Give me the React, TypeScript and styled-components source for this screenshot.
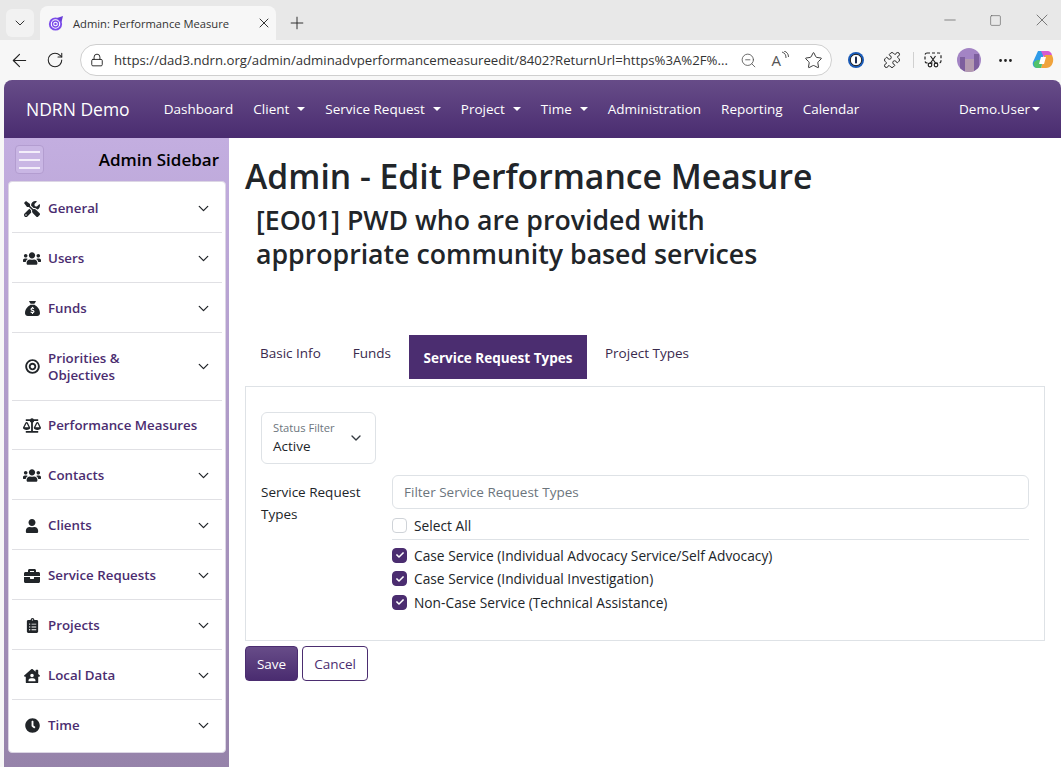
import React from "react"
import styled, { createGlobalStyle } from "styled-components"
import {
	FaTools,
	FaUsers,
	FaBullseye,
	FaBalanceScale,
	FaUser,
	FaBriefcase,
	FaClipboardList,
	FaHouseUser,
	FaClock,
	FaCheck,
} from "react-icons/fa"
import { FaSackDollar } from "react-icons/fa6"
import {
	ArrowLeft,
	RotateCw,
	Lock,
	ZoomOut,
	Star,
	Puzzle,
	Ellipsis,
	ChevronDown,
	X,
	Plus,
	Minus,
	Square,
} from "lucide-react"

const FONT = `"Open Sans", "Noto Sans", sans-serif`

const GlobalStyle = createGlobalStyle`
	html, body {
		margin: 0;
		height: 767px;
		overflow: hidden;
		background: #f7f7f7;
		font-family: ${FONT};
		color: #212529;
	}
	* { box-sizing: border-box; }
`

const sideItems = [
	{ icon: <FaTools size={16} />, label: "General", chevron: true },
	{ icon: <FaUsers size={19} />, label: "Users", chevron: true },
	{ icon: <FaSackDollar size={15} />, label: "Funds", chevron: true },
	{ icon: <FaBullseye size={15} />, label: "Priorities & Objectives", chevron: true, tall: true },
	{ icon: <FaBalanceScale size={19} />, label: "Performance Measures", chevron: false, short: true },
	{ icon: <FaUsers size={19} />, label: "Contacts", chevron: true },
	{ icon: <FaUser size={14} />, label: "Clients", chevron: true },
	{ icon: <FaBriefcase size={16} />, label: "Service Requests", chevron: true },
	{ icon: <FaClipboardList size={15} />, label: "Projects", chevron: true },
	{ icon: <FaHouseUser size={16} />, label: "Local Data", chevron: true },
	{ icon: <FaClock size={15} />, label: "Time", chevron: true },
]

const navItems = [
	{ label: "Dashboard" },
	{ label: "Client", caret: true },
	{ label: "Service Request", caret: true },
	{ label: "Project", caret: true },
	{ label: "Time", caret: true },
	{ label: "Administration" },
	{ label: "Reporting" },
	{ label: "Calendar" },
]

const checks = [
	"Case Service (Individual Advocacy Service/Self Advocacy)",
	"Case Service (Individual Investigation)",
	"Non-Case Service (Technical Assistance)",
]

const App: React.FC = () => {
	return (
		<>
			<GlobalStyle />
			<TabStrip>
				<TabMenu>
					<ChevronDown size={16} strokeWidth={1.5} />
				</TabMenu>
				<BrowserTab>
					<svg width="18" height="18" viewBox="0 0 18 18" fill="none">
						<circle cx="8.5" cy="10" r="6.6" fill="#7c4dea" />
						<circle cx="8.5" cy="10" r="4.2" fill="none" stroke="#fff" strokeWidth="1.1" />
						<circle cx="8.5" cy="10" r="1.8" fill="none" stroke="#fff" strokeWidth="1.1" />
						<path d="M10 4 L16 2 L14.5 8 Z" fill="#6a3fd8" />
					</svg>
					<TabTitle>Admin: Performance Measure</TabTitle>
					<X size={16} strokeWidth={1.5} color="#333" />
				</BrowserTab>
				<NewTab>
					<Plus size={20} strokeWidth={1.1} color="#222" />
				</NewTab>
				<WindowControls>
					<Minus size={18} strokeWidth={0.9} color="#555" />
					<Square size={13} strokeWidth={1.1} color="#555" />
					<X size={20} strokeWidth={0.9} color="#555" />
				</WindowControls>
			</TabStrip>
			<Toolbar>
				<ToolIcon>
					<ArrowLeft size={21} strokeWidth={1.3} color="#222" />
				</ToolIcon>
				<ToolIcon>
					<RotateCw size={18} strokeWidth={1.4} color="#222" />
				</ToolIcon>
				<AddressBar>
					<Lock size={14} strokeWidth={1.6} color="#222" />
					<Url>https://dad3.ndrn.org/admin/adminadvperformancemeasureedit/8402?ReturnUrl=https%3A%2F%...</Url>
					<AddressIcons>
						<ZoomOut size={17} strokeWidth={1.2} color="#555" />
						<ReadAloud>
							A
							<svg width="8" height="10" viewBox="0 0 8 10" fill="none" stroke="#555" strokeWidth="1">
								<path d="M1 1c3 1 4 3 4 6" />
								<path d="M3 0c3 1 4.500 3 4.500 6" />
							</svg>
						</ReadAloud>
						<Star size={19} strokeWidth={1.2} color="#333" />
					</AddressIcons>
				</AddressBar>
				<Extensions>
					<ExtSlot>
						<svg width="18" height="18" viewBox="0 0 18 18">
							<circle cx="9" cy="9" r="8" fill="#1a5bb8" />
							<circle cx="9" cy="9" r="5.700" fill="#fff" stroke="#222" strokeWidth="1" />
							<rect x="8" y="5.500" width="2" height="7" rx="0.800" fill="#1c2a4d" />
						</svg>
					</ExtSlot>
					<ExtSlot>
						<Puzzle size={18} strokeWidth={1.3} color="#222" />
					</ExtSlot>
					<ToolDivider />
					<ExtSlot>
						<svg width="18" height="16" viewBox="0 0 18 16" fill="none" stroke="#222" strokeWidth="1.2">
							<rect x="1" y="1" width="16" height="10" rx="2" strokeDasharray="3 2" />
							<path d="M6.500 4l5 7M11.500 4l-5 7" />
							<circle cx="6" cy="13" r="1.800" />
							<circle cx="12" cy="13" r="1.800" />
						</svg>
					</ExtSlot>
					<ExtSlot>
						<Avatar>
							<svg width="24" height="24" viewBox="0 0 24 24">
								<rect width="24" height="24" fill="#a384c4" />
								<rect x="3" y="9" width="5" height="15" fill="#7d5f9e" />
								<rect x="8" y="11" width="9" height="13" fill="#b39ab0" />
								<rect x="17" y="6" width="5" height="18" fill="#7d5f9e" />
							</svg>
						</Avatar>
					</ExtSlot>
					<ExtSlot>
						<Ellipsis size={17} strokeWidth={2} color="#222" />
					</ExtSlot>
					<CopilotSlot>
						<svg width="22" height="22" viewBox="0 0 22 22">
							<path d="M6 2h6l-3 17H5C2 19 0 16 1 13z" fill="#2f9be8" />
							<path d="M9 2h6c3 0 5 2 5 5l-1 6h-5z" fill="#d65ad0" />
							<path d="M13 6h7l1 3c1 5-2 10-7 10H9z" fill="#f0a33c" />
							<path d="M5 11h6l-2 8H5C2 19 1 15 2 13z" fill="#52c26a" />
							<path d="M9 8h5l-2 7H7z" fill="#fff" />
						</svg>
					</CopilotSlot>
				</Extensions>
			</Toolbar>
			<Page>
				<NavBar>
					<Brand>NDRN Demo</Brand>
					<NavLinks>
						{navItems.map((item) => (
							<NavLink key={item.label}>
								{item.label}
								{item.caret && <Caret />}
							</NavLink>
						))}
					</NavLinks>
					<UserMenu>
						Demo.User
						<Caret />
					</UserMenu>
				</NavBar>
				<Body>
					<Sidebar>
						<SidebarHead>
							<Burger>
								<BurgerLine />
								<BurgerLine />
								<BurgerLine />
							</Burger>
							<SidebarTitle>Admin Sidebar</SidebarTitle>
						</SidebarHead>
						<SideCard>
							{sideItems.map((item) => (
								<SideItem key={item.label} $tall={item.tall} $short={item.short}>
									<SideIcon>{item.icon}</SideIcon>
									<SideLabel $tall={item.tall}>{item.label}</SideLabel>
									{item.chevron && <ChevronDown size={17} strokeWidth={1.8} color="#212529" />}
								</SideItem>
							))}
						</SideCard>
					</Sidebar>
					<Main>
						<PageTitle>Admin - Edit Performance Measure</PageTitle>
						<SubTitle>
							[EO01] PWD who are provided with
							<br />
							appropriate community based services
						</SubTitle>
						<Tabs>
							<Tab>Basic Info</Tab>
							<Tab>Funds</Tab>
							<ActiveTab>Service Request Types</ActiveTab>
							<Tab>Project Types</Tab>
						</Tabs>
						<Panel>
							<StatusFilter>
								<div>
									<FloatLabel>Status Filter</FloatLabel>
									<SelectValue>Active</SelectValue>
								</div>
								<ChevronDown size={16} strokeWidth={2} color="#343a40" />
							</StatusFilter>
							<FormRow>
								<FieldLabel>
									Service Request
									<br />
									Types
								</FieldLabel>
								<FieldBody>
									<FilterInput placeholder="Filter Service Request Types" readOnly />
									<SelectAllRow>
										<CheckBox />
										<CheckText>Select All</CheckText>
									</SelectAllRow>
									<Rule />
									{checks.map((label) => (
										<CheckRow key={label}>
											<CheckBox $checked>
												<FaCheck size={8} color="#fff" />
											</CheckBox>
											<CheckText>{label}</CheckText>
										</CheckRow>
									))}
								</FieldBody>
							</FormRow>
						</Panel>
						<Actions>
							<SaveButton>Save</SaveButton>
							<CancelButton>Cancel</CancelButton>
						</Actions>
					</Main>
				</Body>
			</Page>
		</>
	)
}

export default App

const TabStrip = styled.div`
	height: 40px;
	background: #e8e8e8;
	display: flex;
	align-items: flex-end;
	padding-left: 6px;
`

const TabMenu = styled.div`
	width: 28px;
	height: 28px;
	margin: 0 6px 3px 0;
	border-radius: 6px;
	background: #f2f2f2;
	display: flex;
	align-items: center;
	justify-content: center;
	color: #333;
`

const BrowserTab = styled.div`
	width: 236px;
	height: 34px;
	background: #f7f7f7;
	border-radius: 8px 8px 0 0;
	display: flex;
	align-items: center;
	padding: 0 4px 0 7px;
	gap: 8px;
`

const TabTitle = styled.span`
	flex: 1;
	font-size: 11.2px;
	color: #333;
	white-space: nowrap;
`

const NewTab = styled.div`
	width: 36px;
	height: 34px;
	display: flex;
	align-items: center;
	justify-content: center;
	margin-left: 3px;
`

const WindowControls = styled.div`
	margin-left: auto;
	align-self: flex-start;
	height: 40px;
	width: 120px;
	display: flex;
	align-items: center;
	justify-content: space-between;
	padding-right: 9px;
`

const Toolbar = styled.div`
	height: 40px;
	background: #f7f7f7;
	display: flex;
	align-items: center;
	padding-left: 1px;
`

const ToolIcon = styled.div`
	width: 36px;
	height: 32px;
	display: flex;
	align-items: center;
	justify-content: center;
`

const AddressBar = styled.div`
	width: 752px;
	height: 32px;
	margin-left: 7px;
	background: #fff;
	border: 1px solid #cfcfcf;
	border-radius: 16px;
	display: flex;
	align-items: center;
	padding: 0 8px 0 9px;
	gap: 10px;
`

const Url = styled.span`
	flex: 1;
	font-size: 13.2px;
	color: #333;
	white-space: nowrap;
	overflow: hidden;
`

const AddressIcons = styled.div`
	display: flex;
	align-items: center;
	gap: 15px;
`

const ReadAloud = styled.span`
	display: flex;
	align-items: flex-start;
	font-size: 15px;
	line-height: 18px;
	color: #555;
`

const Extensions = styled.div`
	flex: 1;
	display: flex;
	align-items: center;
	padding-left: 6px;
`

const ExtSlot = styled.div`
	width: 36px;
	height: 32px;
	flex: none;
	display: flex;
	align-items: center;
	justify-content: center;
`

const CopilotSlot = styled(ExtSlot)`
	margin-left: 2px;
`

const ToolDivider = styled.div`
	width: 1px;
	height: 16px;
	margin: 0 1px 0 3px;
	background: #d0d0d0;
`

const Avatar = styled.div`
	width: 24px;
	height: 24px;
	border-radius: 50%;
	overflow: hidden;
	display: flex;
`

const Page = styled.div`
	height: 687px;
	margin-left: 4px;
	background: #fff;
	border-radius: 8px 8px 0 0;
	overflow: hidden;
	display: flex;
	flex-direction: column;
`

const NavBar = styled.nav`
	height: 58px;
	flex: none;
	background: linear-gradient(180deg, #674c88, #4a2c70);
	display: flex;
	align-items: center;
	padding: 0 21px 0 22px;
	color: #fff;
`

const Brand = styled.div`
	font-size: 17.5px;
	margin-right: 34px;
`

const NavLinks = styled.div`
	display: flex;
	gap: 20px;
`

const NavLink = styled.div`
	font-size: 13.5px;
	display: flex;
	align-items: center;
	gap: 8px;
	white-space: nowrap;
`

const Caret = styled.span`
	width: 0;
	height: 0;
	border-left: 4.5px solid transparent;
	border-right: 4.5px solid transparent;
	border-top: 4.5px solid #fff;
`

const UserMenu = styled(NavLink)`
	margin-left: auto;
	gap: 2px;
`

const Body = styled.div`
	flex: 1;
	display: flex;
	min-height: 0;
`

const Sidebar = styled.aside`
	width: 225px;
	flex: none;
	background: linear-gradient(180deg, #c3aee0, #9683aa);
	padding: 0 3px 0 4px;
`

const SidebarHead = styled.div`
	height: 43px;
	display: flex;
	align-items: center;
	justify-content: space-between;
	padding: 0 7px 0 7px;
`

const Burger = styled.div`
	width: 29px;
	height: 29px;
	border: 1px solid #b39dd0;
	border-radius: 4px;
	background: #c9b6e4;
	display: flex;
	flex-direction: column;
	justify-content: center;
	gap: 6px;
	padding: 0 3px;
`

const BurgerLine = styled.span`
	height: 2px;
	background: #f3eefa;
`

const SidebarTitle = styled.div`
	font-size: 17px;
	font-weight: 600;
	color: #000;
	white-space: nowrap;
`

const SideCard = styled.div`
	height: 572px;
	background: #fff;
	border: 1px solid #dcd6e4;
	border-radius: 4px;
	padding: 1px 3px 0;
`

const SideItem = styled.div<{ $tall?: boolean; $short?: boolean }>`
	height: ${(p) => (p.$tall ? "68px" : p.$short ? "49px" : "50px")};
	display: flex;
	align-items: center;
	padding: ${(p) => (p.$short || p.$tall ? "0" : "2px")} 10px 0 11px;
	border-bottom: 1px solid #e0e0e4;
	&:last-child {
		border-bottom: 0;
		padding-top: 0;
	}
`

const SideIcon = styled.span`
	width: 18px;
	margin-right: 7px;
	display: flex;
	justify-content: center;
	color: #212529;
`

const SideLabel = styled.span<{ $tall?: boolean }>`
	flex: 1;
	font-size: 13.3px;
	font-weight: 600;
	line-height: 17px;
	color: #4b2d70;
	max-width: ${(p) => (p.$tall ? "110px" : "none")};
	margin-right: auto;
	white-space: ${(p) => (p.$tall ? "normal" : "nowrap")};
`

const Main = styled.main`
	flex: 1;
	padding: 17px 16px 0;
`

const PageTitle = styled.h1`
	margin: 0;
	font-size: 33.7px;
	font-weight: 600;
	line-height: 42px;
	white-space: nowrap;
`

const SubTitle = styled.h2`
	margin: 6px 0 0 11px;
	font-size: 26.7px;
	font-weight: 600;
	line-height: 34px;
	white-space: nowrap;
`

const Tabs = styled.div`
	margin-top: 64px;
	margin-left: -1px;
	display: flex;
	align-items: flex-start;
	height: 51px;
`

const Tab = styled.div`
	padding: 9px 16px;
	font-size: 13.5px;
	line-height: 18px;
	color: #3a2a4d;
	white-space: nowrap;
`

const ActiveTab = styled.div`
	width: 178px;
	height: 44px;
	margin: 0 2px;
	background: #4b2d70;
	color: #fff;
	font-size: 13.5px;
	font-weight: 700;
	display: flex;
	align-items: center;
	justify-content: center;
	padding-top: 2px;
	white-space: nowrap;
`

const Panel = styled.section`
	height: 255px;
	border: 1px solid #dee2e6;
	padding: 25px 15px 0;
`

const StatusFilter = styled.div`
	width: 115px;
	height: 52px;
	border: 1px solid #dee2e6;
	border-radius: 6px;
	display: flex;
	align-items: center;
	justify-content: space-between;
	padding: 0 11px;
`

const FloatLabel = styled.div`
	font-size: 11.2px;
	line-height: 14px;
	color: #6c757d;
`

const SelectValue = styled.div`
	margin-top: 1px;
	font-size: 13.5px;
	line-height: 20px;
`

const FormRow = styled.div`
	display: flex;
	margin-top: 11px;
`

const FieldLabel = styled.div`
	width: 131px;
	flex: none;
	padding-top: 6px;
	font-size: 13.5px;
	line-height: 22px;
`

const FieldBody = styled.div`
	width: 637px;
`

const FilterInput = styled.input`
	display: block;
	width: 100%;
	height: 34px;
	border: 1px solid #dee2e6;
	border-radius: 6px;
	padding: 0 11px;
	font: 13.5px ${FONT};
	outline: none;
	&::placeholder {
		color: #6c757d;
	}
`

const CheckRow = styled.div`
	height: 23.500px;
	display: flex;
	align-items: center;
	gap: 7px;
`

const SelectAllRow = styled(CheckRow)`
	margin-top: 5px;
`

const CheckBox = styled.span<{ $checked?: boolean }>`
	width: 15px;
	height: 15px;
	border-radius: 4px;
	border: 1px solid ${(p) => (p.$checked ? "#4b2d70" : "#cfd3d8")};
	background: ${(p) => (p.$checked ? "#4b2d70" : "#fff")};
	display: flex;
	align-items: center;
	justify-content: center;
`

const CheckText = styled.span`
	font-size: 13.75px;
	white-space: nowrap;
`

const Rule = styled.div`
	height: 1px;
	margin: 1px 0 4px;
	background: #dee2e6;
`

const Actions = styled.div`
	display: flex;
	gap: 4px;
	margin-top: 5px;
`

const SaveButton = styled.button`
	width: 53px;
	height: 35px;
	border: 1px solid #4b2d70;
	border-radius: 4px;
	background: linear-gradient(180deg, #674c88, #4a2c70);
	color: #fff;
	font: 13.5px ${FONT};
	padding: 0;
`

const CancelButton = styled.button`
	width: 66px;
	height: 35px;
	border: 1px solid #4b2d70;
	border-radius: 4px;
	background: #fff;
	color: #4b2d70;
	font: 13.5px ${FONT};
	padding: 0;
`
